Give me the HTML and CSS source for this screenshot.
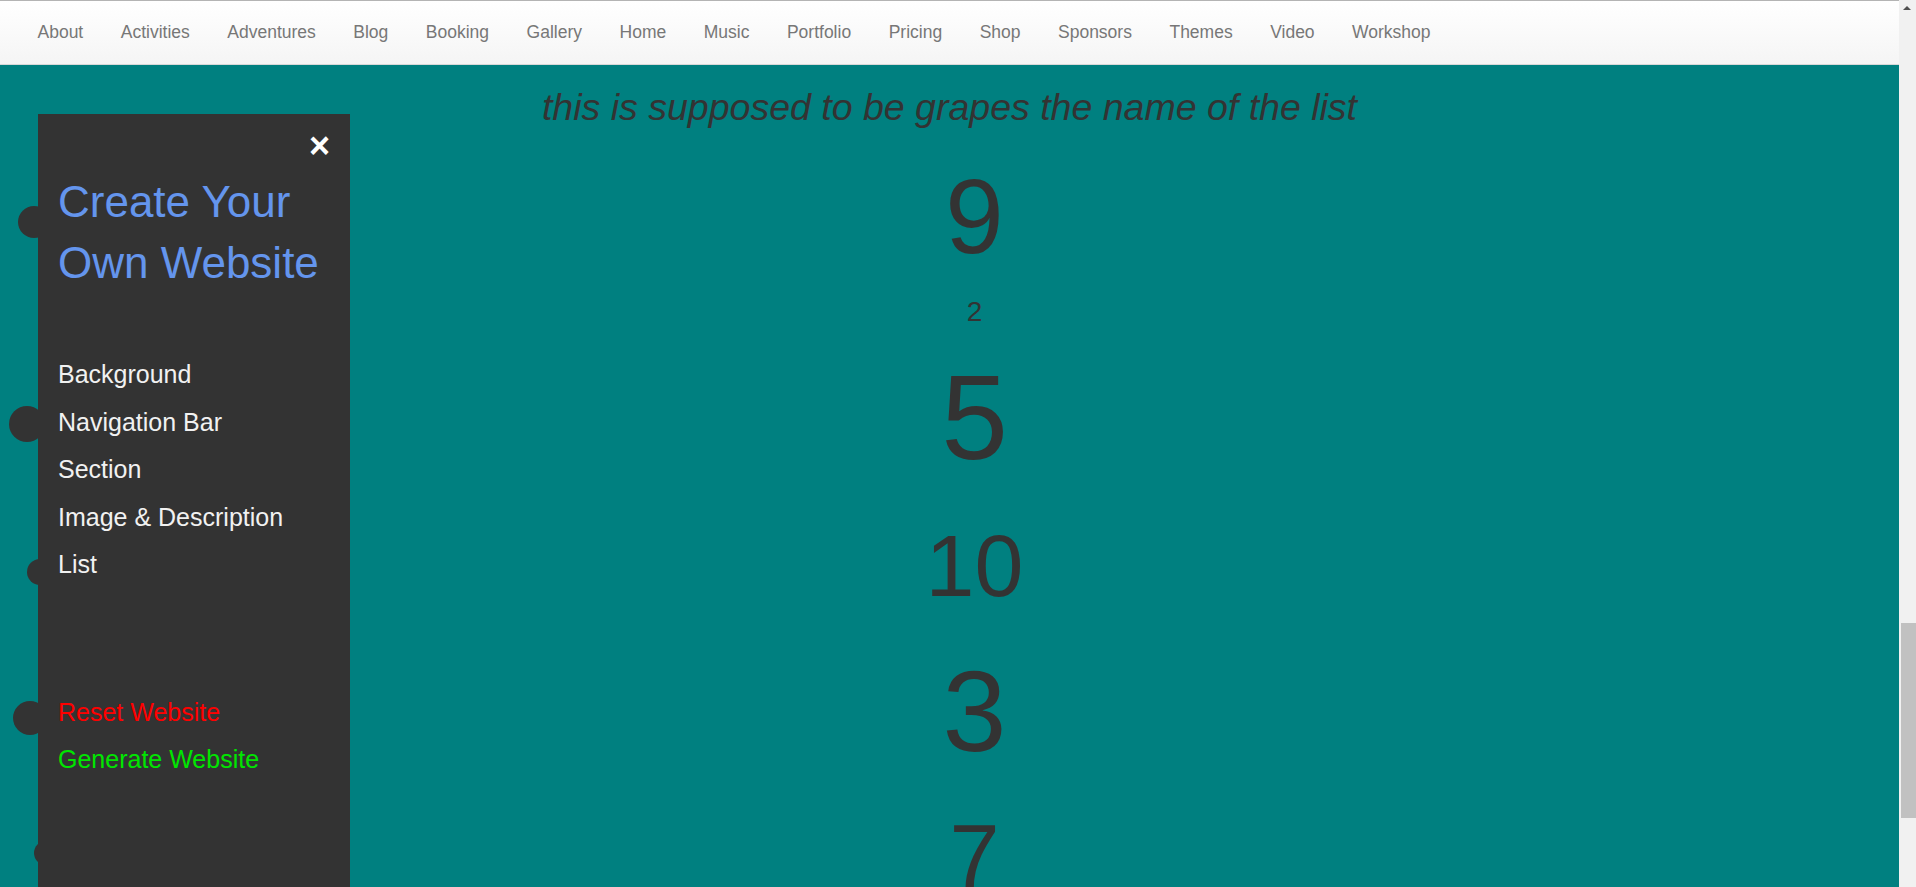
FILE: index.html
```html
<!DOCTYPE html>
<html lang="en">
<head>
<meta charset="utf-8">
<title>Website Builder</title>
<link rel="stylesheet" href="styles.css">
</head>
<body>
<nav class="navbar">
  <ul class="nav-links">
    <li><a href="#">About</a></li>
    <li><a href="#">Activities</a></li>
    <li><a href="#">Adventures</a></li>
    <li><a href="#">Blog</a></li>
    <li><a href="#">Booking</a></li>
    <li><a href="#">Gallery</a></li>
    <li><a href="#">Home</a></li>
    <li><a href="#">Music</a></li>
    <li><a href="#">Portfolio</a></li>
    <li><a href="#">Pricing</a></li>
    <li><a href="#">Shop</a></li>
    <li><a href="#">Sponsors</a></li>
    <li><a href="#">Themes</a></li>
    <li><a href="#">Video</a></li>
    <li><a href="#">Workshop</a></li>
  </ul>
</nav>

<main class="page">
  <h1 class="list-title">this is supposed to be grapes the name of the list</h1>
  <ul class="numbers">
    <li style="font-size:105px">9</li>
    <li style="font-size:28px">2</li>
    <li style="font-size:120px">5</li>
    <li style="font-size:88px">10</li>
    <li style="font-size:115px">3</li>
    <li style="font-size:90px">7</li>
  </ul>
</main>

<div class="dots">
  <span class="dot dot-1"></span>
  <span class="dot dot-2"></span>
  <span class="dot dot-3"></span>
  <span class="dot dot-4"></span>
  <span class="dot dot-5"></span>
</div>

<aside class="sidenav">
  <a href="#" class="closebtn">×</a>
  <h2 class="sidenav-title">Create Your Own Website</h2>
  <div class="sidenav-links">
    <a href="#">Background</a>
    <a href="#">Navigation Bar</a>
    <a href="#">Section</a>
    <a href="#">Image &amp; Description</a>
    <a href="#">List</a>
  </div>
  <div class="sidenav-actions">
    <a href="#" class="reset">Reset Website</a>
    <a href="#" class="generate">Generate Website</a>
  </div>
</aside>

<div class="scrollbar">
  <span class="arrow-up"></span>
  <span class="thumb"></span>
</div>
</body>
</html>
```

FILE: styles.css
```css
html {
  overflow: hidden;
}

body {
  margin: 0;
  background: #008080;
  font-family: "Liberation Sans", Arial, sans-serif;
  color: #333;
}

/* top navigation */
.navbar {
  position: fixed;
  top: 0;
  left: 0;
  right: 17px;
  height: 63px;
  border-top: 1px solid #b4b4b4;
  border-bottom: 1px solid #d8d8d8;
  background: linear-gradient(to bottom, #ffffff 0%, #f5f5f5 100%);
  z-index: 10;
}

.nav-links {
  list-style: none;
  margin: 0;
  padding: 0 18.75px;
  display: flex;
}

.nav-links a {
  display: block;
  padding: 18.75px;
  font-size: 17.5px;
  line-height: 25px;
  color: #777;
  text-decoration: none;
}

/* main content */
.page {
  margin-right: 17px;
  padding-top: 87.4px;
}

.list-title {
  margin: 0 0 13px;
  font-size: 37.5px;
  line-height: 1.1;
  font-style: italic;
  font-weight: normal;
  text-align: center;
  color: #333;
}

.numbers {
  list-style: none;
  margin: 0;
  padding: 0 0 0 50px;
  text-align: center;
  line-height: 1.42857;
}

/* decorative dots behind the side panel */
.dots {
  position: fixed;
  top: 0;
  left: 0;
  width: 60px;
  height: 100%;
  z-index: 5;
}

.dot {
  position: absolute;
  border-radius: 50%;
  background: #333;
}

.dot-1 { left: 18px; top: 206px; width: 32px; height: 32px; }
.dot-2 { left: 9px;  top: 406px; width: 36px; height: 36px; }
.dot-3 { left: 27px; top: 559px; width: 26px; height: 26px; }
.dot-4 { left: 13px; top: 701px; width: 34px; height: 34px; }
.dot-5 { left: 34px; top: 841px; width: 24px; height: 24px; }

/* side panel */
.sidenav {
  position: fixed;
  top: 114px;
  left: 38px;
  bottom: 0;
  width: 312px;
  box-sizing: border-box;
  padding-top: 56.7px;
  background: #333;
  z-index: 6;
}

.closebtn {
  position: absolute;
  top: 14px;
  right: 20px;
  font-size: 36px;
  line-height: 1;
  font-weight: bold;
  color: #fff;
  text-decoration: none;
}

.sidenav-title {
  margin: 0 0 57.6px;
  padding: 0 18px 0 20px;
  font-size: 44px;
  line-height: 61.6px;
  font-weight: normal;
  color: #6495ed;
}

.sidenav-links a,
.sidenav-actions a {
  display: block;
  padding: 10px 20px;
  font-size: 25px;
  line-height: 27.5px;
  color: #f1f1f1;
  text-decoration: none;
}

.sidenav-actions {
  margin-top: 100px;
}

.sidenav-actions .reset {
  color: #ff0000;
}

.sidenav-actions .generate {
  color: #00e600;
}

/* scrollbar look */
.scrollbar {
  position: fixed;
  top: 0;
  right: 0;
  bottom: 0;
  width: 17px;
  background: #f1f1f1;
  z-index: 20;
}

.arrow-up {
  position: absolute;
  top: 6px;
  left: 4px;
  width: 0;
  height: 0;
  border-left: 4.5px solid transparent;
  border-right: 4.5px solid transparent;
  border-bottom: 4.5px solid #505050;
}

.thumb {
  position: absolute;
  top: 623px;
  left: 2px;
  right: 0;
  height: 195px;
  background: #c1c1c1;
}
```
